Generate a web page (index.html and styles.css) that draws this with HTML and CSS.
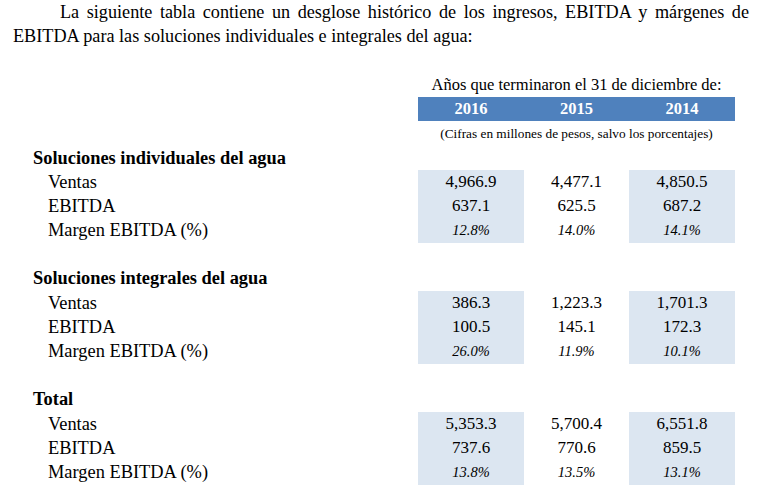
FILE: index.html
```html
<!DOCTYPE html>
<html lang="es">
<head>
<meta charset="utf-8">
<title>Desglose histórico</title>
<link rel="stylesheet" href="styles.css">
</head>
<body>
<p class="intro">La siguiente tabla contiene un desglose histórico de los ingresos, EBITDA y márgenes de EBITDA para las soluciones individuales e integrales del agua:</p>

<div class="table">
  <div class="row caption-row"><span></span><span class="span3">Años que terminaron el 31 de diciembre de:</span></div>
  <div class="row years"><span class="blank"></span><span>2016</span><span>2015</span><span>2014</span></div>
  <div class="row note-row"><span></span><span class="span3">(Cifras en millones de pesos, salvo los porcentajes)</span></div>

  <div class="row head"><span>Soluciones individuales del agua</span></div>
  <div class="row"><span class="label">Ventas</span><span class="num shade">4,966.9</span><span class="num">4,477.1</span><span class="num shade">4,850.5</span></div>
  <div class="row"><span class="label">EBITDA</span><span class="num shade">637.1</span><span class="num">625.5</span><span class="num shade">687.2</span></div>
  <div class="row"><span class="label">Margen EBITDA (%)</span><span class="num pct shade">12.8%</span><span class="num pct">14.0%</span><span class="num pct shade">14.1%</span></div>

  <div class="row spacer"></div>
  <div class="row head"><span>Soluciones integrales del agua</span></div>
  <div class="row"><span class="label">Ventas</span><span class="num shade">386.3</span><span class="num">1,223.3</span><span class="num shade">1,701.3</span></div>
  <div class="row"><span class="label">EBITDA</span><span class="num shade">100.5</span><span class="num">145.1</span><span class="num shade">172.3</span></div>
  <div class="row"><span class="label">Margen EBITDA (%)</span><span class="num pct shade">26.0%</span><span class="num pct">11.9%</span><span class="num pct shade">10.1%</span></div>

  <div class="row spacer"></div>
  <div class="row head"><span>Total</span></div>
  <div class="row"><span class="label">Ventas</span><span class="num shade">5,353.3</span><span class="num">5,700.4</span><span class="num shade">6,551.8</span></div>
  <div class="row"><span class="label">EBITDA</span><span class="num shade">737.6</span><span class="num">770.6</span><span class="num shade">859.5</span></div>
  <div class="row"><span class="label">Margen EBITDA (%)</span><span class="num pct shade">13.8%</span><span class="num pct">13.5%</span><span class="num pct shade">13.1%</span></div>
</div>
</body>
</html>
```

FILE: styles.css
```css
html, body {
  margin: 0;
  padding: 0;
  background: #ffffff;
}

body {
  font-family: "Liberation Serif", "Times New Roman", serif;
  color: #000;
  font-size: 18.4px;
}

.intro {
  margin: 0;
  padding: 0 16px 0 13px;
  font-size: 18.2px;
  line-height: 24px;
  text-align: justify;
  text-indent: 47px;
}

.table {
  margin-top: 25px;
  width: 735px;
}

.row {
  display: grid;
  grid-template-columns: 418px 106px 105px 106px;
  height: 24.33px;
  align-items: stretch;
}

.row > span {
  display: flex;
  align-items: center;
}

.span3 {
  grid-column: 2 / span 3;
  justify-content: center;
}

.caption-row {
  height: 24px;
  font-size: 16.5px;
}

.years {
  height: 24px;
  font-weight: bold;
  font-size: 16.5px;
  color: #ffffff;
}

.years > span {
  background: #4f81bd;
  justify-content: center;
}

.years > .blank {
  background: transparent;
}

.note-row {
  height: 25px;
  font-size: 13.3px;
}

.head {
  height: 24px;
  font-weight: bold;
}

.head > span {
  padding-left: 33px;
  grid-column: 1 / span 4;
}

.spacer {
  height: 24px;
}

.label {
  padding-left: 48px;
}

.num {
  justify-content: center;
  font-size: 17px;
}

.pct {
  font-style: italic;
  font-size: 14.5px;
}

.shade {
  background: #dce6f1;
}
```
